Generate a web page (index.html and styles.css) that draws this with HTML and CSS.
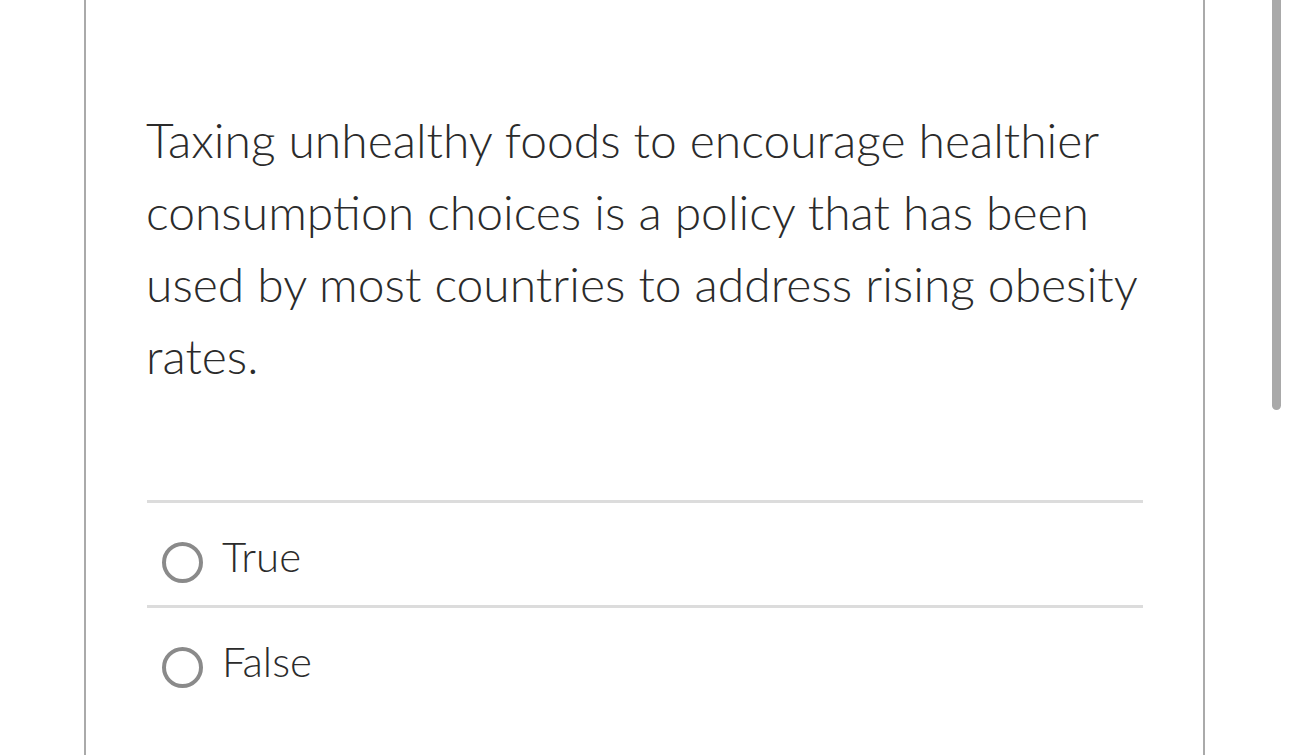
FILE: index.html
```html
<!DOCTYPE html>
<html lang="en">
<head>
  <meta name="viewport" content="width=device-width, initial-scale=1.0">
  <title>Question</title>
  <link rel="stylesheet" href="styles.css">
</head>
<body>
  <div class="card">
    <p class="question">Taxing unhealthy foods to encourage healthier consumption choices is a policy that has been used by most countries to address rising obesity rates.</p>

    <!-- answer choices -->
    <ul class="choices">
      <li class="choice">
        <span class="radio"></span>
        <span class="label">True</span>
      </li>
      <li class="choice">
        <span class="radio"></span>
        <span class="label">False</span>
      </li>
    </ul>
  </div>
  <div class="scroll-thumb"></div>
</body>
</html>
```

FILE: styles.css
```css
body {
  margin: 0;
  background-color: #ffffff;
  font-family: 'Lato', 'Open Sans', sans-serif;
  font-weight: 300;
  color: #2b2b2b;
  overflow: hidden;
}
.card {
  margin-left: 84px;
  width: 1121px;
  height: 755px;
  border-left: 2px solid #aaaaaa;
  border-right: 2px solid #aaaaaa;
  padding: 0 60px 0 60px;
  box-sizing: border-box;
}
.question {
  margin: 0;
  padding-top: 104px;
  font-size: 48px;
  line-height: 72px;
}
.choices {
  list-style: none;
  margin: 108px 0 0 1px;
  padding: 0;
}
.choice {
  display: flex;
  align-items: flex-start;
  height: 102px;
  border-top: 3px solid #dcdcdc;
}
.radio {
  flex: none;
  width: 33px;
  height: 33px;
  border: 4px solid #8a8a8a;
  border-radius: 50%;
  margin: 39px 19px 0 15px;
}
.label {
  font-size: 42px;
  line-height: 50px;
  margin-top: 28px;
}
/* overlay scrollbar */
.scroll-thumb {
  position: fixed;
  top: -10px;
  right: 9px;
  width: 9px;
  height: 420px;
  border-radius: 5px;
  background-color: #a9a9a9;
}
```
